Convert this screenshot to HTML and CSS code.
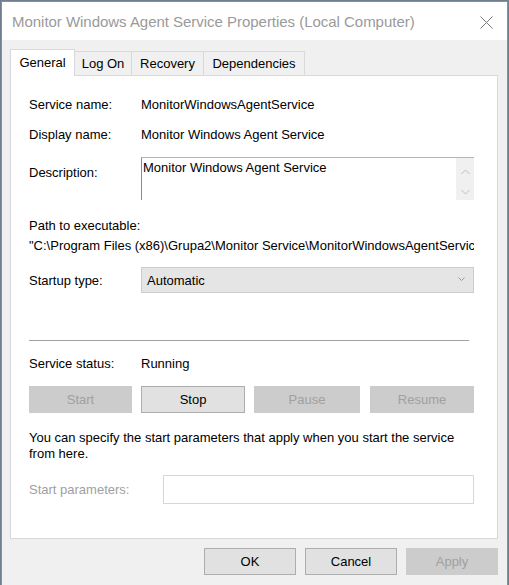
FILE: index.html
```html
<!DOCTYPE html>
<html>
<head>
<meta charset="utf-8">
<link rel="stylesheet" href="styles.css">
</head>
<body>
<div class="window">
  <div class="titlebar">
    <span class="title">Monitor Windows Agent Service Properties (Local Computer)</span>
    <svg class="close" width="13" height="13" viewBox="0 0 13 13"><path d="M0.5 0.5 L12.5 12.5 M12.5 0.5 L0.5 12.5" stroke="#7a7a7a" stroke-width="1" fill="none"/></svg>
  </div>
  <div class="client">
    <div class="tabs">
      <div class="tab active">General</div>
      <div class="tab t-logon">Log On</div>
      <div class="tab t-recovery">Recovery</div>
      <div class="tab t-deps">Dependencies</div>
    </div>
    <div class="panel">
      <div class="row r-name"><span class="label">Service name:</span><span>MonitorWindowsAgentService</span></div>
      <div class="row r-display"><span class="label">Display name:</span><span>Monitor Windows Agent Service</span></div>
      <div class="row r-desc">
        <span class="label desc-label">Description:</span>
        <div class="textbox">
          <div class="tb-text">Monitor Windows Agent Service</div>
          <div class="tb-scroll">
            <svg width="9" height="6" viewBox="0 0 9 6"><path d="M0.5 5 L4.5 1 L8.5 5" stroke="#c0c0c0" fill="none"/></svg>
            <svg width="9" height="6" viewBox="0 0 9 6"><path d="M0.5 1 L4.5 5 L8.5 1" stroke="#c0c0c0" fill="none"/></svg>
          </div>
        </div>
      </div>
      <div class="line r-pathlabel">Path to executable:</div>
      <div class="line path">"C:\Program Files (x86)\Grupa2\Monitor Service\MonitorWindowsAgentService.exe"</div>
      <div class="row r-startup">
        <span class="label">Startup type:</span>
        <div class="combo">
          <span>Automatic</span>
          <svg width="7" height="4" viewBox="0 0 7 4"><path d="M0.5 0.5 L3.5 3.5 L6.5 0.5" stroke="#9a9a9a" fill="none"/></svg>
        </div>
      </div>
      <div class="sep"></div>
      <div class="row r-status"><span class="label">Service status:</span><span>Running</span></div>
      <div class="svc-buttons">
        <div class="btn disabled b-start">Start</div>
        <div class="btn b-stop">Stop</div>
        <div class="btn disabled b-pause">Pause</div>
        <div class="btn disabled b-resume">Resume</div>
      </div>
      <p class="hint">You can specify the start parameters that apply when you start the service from here.</p>
      <div class="row r-params">
        <span class="label params-label">Start parameters:</span>
        <div class="input"></div>
      </div>
    </div>
    <div class="dlg-buttons">
      <div class="btn dlg">OK</div>
      <div class="btn dlg">Cancel</div>
      <div class="btn dlg disabled">Apply</div>
    </div>
  </div>
</div>
</body>
</html>
```

FILE: styles.css
```css
html, body {
  margin: 0;
  padding: 0;
  background: #6f7f8f;
  width: 509px;
  height: 585px;
  overflow: hidden;
}
body {
  font-family: "Liberation Sans", Arial, sans-serif;
  font-size: 13px;
  color: #000;
}
.window {
  margin: 1px 0 0 1px;
  width: 505px;
  height: 590px;
  border: 1px solid #8f8f8f;
  border-bottom: none;
  background: #f0f0f0;
  display: flex;
  flex-direction: column;
}
.titlebar {
  height: 38px;
  background: #fff;
  display: flex;
  align-items: center;
  justify-content: space-between;
  padding: 0 14px 0 10px;
}
.title {
  font-size: 15px;
  color: #9a9a9a;
  margin-top: 1px;
  letter-spacing: -0.03px;
}
.close {
  display: block;
  margin-top: 2px;
}
.client {
  padding: 9px 8px 0 8px;
  display: flex;
  flex-direction: column;
}
.tabs {
  display: flex;
  align-items: flex-end;
  height: 26px;
  position: relative;
  z-index: 1;
}
.tab {
  height: 24px;
  border: 1px solid #d9d9d9;
  border-bottom: none;
  background: #f0f0f0;
  display: flex;
  align-items: center;
  justify-content: center;
  box-sizing: border-box;
  margin-left: -1px;
}
.tab.active {
  height: 27px;
  width: 65px;
  background: #fff;
  margin-left: 0;
  margin-bottom: -1px;
  padding-bottom: 2px;
}
.t-logon { width: 58px; }
.t-recovery { width: 73px; }
.t-deps { width: 102px; }
.panel {
  width: 488px;
  height: 464px;
  box-sizing: border-box;
  background: #fff;
  border: 1px solid #d9d9d9;
  padding: 18px 23px 0 18px;
  display: flex;
  flex-direction: column;
}
.row {
  display: flex;
  align-items: center;
}
.label {
  width: 112px;
  flex: none;
}
.r-name { height: 20px; }
.r-display { height: 20px; margin-top: 10px; }
.r-desc { align-items: flex-start; margin-top: 13px; }
.desc-label { margin-top: 8px; }
.textbox {
  width: 333px;
  height: 43px;
  box-sizing: border-box;
  border-top: 1px solid #b4b4b4;
  border-left: 1px solid #8a8a8a;
  display: flex;
  justify-content: space-between;
}
.tb-text {
  padding: 2px 0 0 1px;
}
.tb-scroll {
  width: 18px;
  background: #f0f0f0;
  display: flex;
  flex-direction: column;
  align-items: center;
  gap: 14px;
  padding-top: 11px;
}
.tb-scroll svg { display: block; }
.line {
  height: 20px;
  line-height: 20px;
  white-space: nowrap;
  overflow: hidden;
}
.r-pathlabel { margin-top: 16px; }
.path { width: 445px; }
.r-startup { margin-top: 11px; }
.combo {
  width: 333px;
  height: 26px;
  box-sizing: border-box;
  background: #e5e5e5;
  border: 1px solid #cccccc;
  display: flex;
  align-items: center;
  justify-content: space-between;
  padding: 0 8px 0 5px;
}
.combo svg { display: block; margin-top: -2px; }
.sep {
  width: 440px;
  height: 1px;
  background: #a0a0a0;
  margin-top: 47px;
}
.r-status { height: 20px; margin-top: 12px; }
.svc-buttons {
  display: flex;
  margin-top: 13px;
}
.btn {
  height: 27px;
  box-sizing: border-box;
  border: 1px solid #adadad;
  background: #e1e1e1;
  display: flex;
  align-items: center;
  justify-content: center;
}
.b-start { width: 103px; }
.b-stop { width: 104px; margin-left: 9px; }
.b-pause { width: 106px; margin-left: 9px; }
.b-resume { width: 104px; margin-left: 10px; }
.btn.disabled {
  background: #cccccc;
  border-color: #cccccc;
  color: #a0a0a0;
}
.hint {
  margin: 17px 0 0 0;
  line-height: 16px;
}
.r-params { margin-top: 13px; }
.params-label { width: 134px; color: #a0a0a0; }
.input {
  width: 311px;
  height: 29px;
  box-sizing: border-box;
  border: 1px solid #d7d7d7;
  background: #fff;
}
.dlg-buttons {
  width: 488px;
  display: flex;
  justify-content: flex-end;
  gap: 9px;
  margin-top: 9px;
}
.btn.dlg { width: 92px; }
```
